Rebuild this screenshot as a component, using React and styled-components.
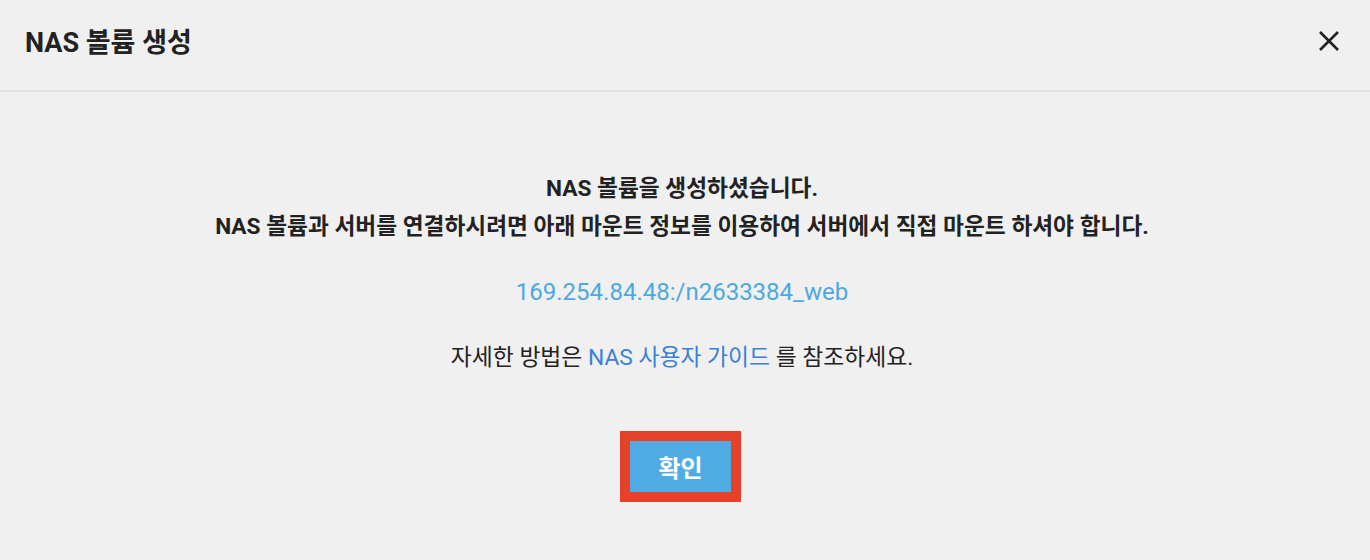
import React from 'react'
import styled, { createGlobalStyle } from 'styled-components'

const GlobalStyle = createGlobalStyle`
  html, body {
    margin: 0;
    padding: 0;
    background: #f0f0f0;
    font-family: Roboto, "Noto Sans CJK KR", sans-serif;
    color: #222;
  }
`

const Dialog = styled.div`
  width: 1370px;
  height: 560px;
  background: #f0f0f0;
  display: flex;
  flex-direction: column;
`

const Header = styled.div`
  height: 92px;
  border-bottom: 2px solid #e2e2e2;
  display: flex;
  align-items: center;
  justify-content: space-between;
  padding: 0 30px 0 25px;
  box-sizing: border-box;
  flex-shrink: 0;
`

const Title = styled.h1`
  margin: -10px 0 0;
  font-size: 27px;
  font-weight: 700;
  color: #222;
`

const CloseButton = styled.button`
  border: 0;
  background: none;
  padding: 0;
  width: 22px;
  height: 22px;
  display: flex;
  align-items: center;
  justify-content: center;
  cursor: pointer;
  margin-top: -8px;
`

const Body = styled.div`
  display: flex;
  flex-direction: column;
  align-items: center;
  padding: 78px 6px 0 0;
`

const Message = styled.p`
  margin: 0;
  font-size: 22.7px;
  font-weight: 700;
  line-height: 38px;
  text-align: center;
`

const MountPath = styled.div`
  margin-top: 31px;
  font-size: 24px;
  line-height: 30px;
  color: #4da8e0;
`

const Guide = styled.p`
  margin: 36px 0 0;
  font-size: 22.8px;
  line-height: 30px;
  color: #222;
`

const GuideLink = styled.a`
  color: #3a80d6;
  text-decoration: none;
`

const Highlight = styled.div`
  margin: 58px 3px 0 0;
  border: 10px solid #e8412a;
  display: flex;
`

const ConfirmButton = styled.button`
  width: 101px;
  height: 51px;
  border: 0;
  background: #50abe4;
  color: #fff;
  font-family: Roboto, "Noto Sans CJK KR", sans-serif;
  font-size: 24px;
  font-weight: 700;
  cursor: pointer;
`

export default function App() {
  return (
    <>
      <GlobalStyle />
      <Dialog>
        <Header>
          <Title>NAS 볼륨 생성</Title>
          <CloseButton aria-label="닫기">
            <svg width="20" height="20" viewBox="0 0 20 20">
              <path d="M1 1 L19 19 M19 1 L1 19" stroke="#222" strokeWidth="2.6" />
            </svg>
          </CloseButton>
        </Header>
        <Body>
          <Message>
            NAS 볼륨을 생성하셨습니다.
            <br />
            NAS 볼륨과 서버를 연결하시려면 아래 마운트 정보를 이용하여 서버에서 직접 마운트 하셔야 합니다.
          </Message>
          <MountPath>169.254.84.48:/n2633384_web</MountPath>
          <Guide>
            자세한 방법은 <GuideLink href="#">NAS 사용자 가이드</GuideLink> 를 참조하세요.
          </Guide>
          <Highlight>
            <ConfirmButton>확인</ConfirmButton>
          </Highlight>
        </Body>
      </Dialog>
    </>
  )
}
